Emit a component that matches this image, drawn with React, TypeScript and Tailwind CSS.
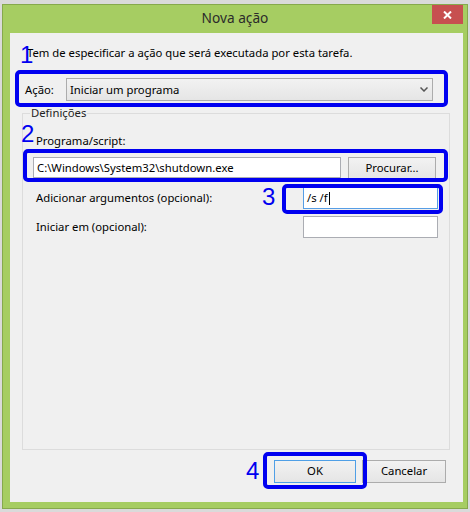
import React from 'react'

// numbered blue frames drawn over the dialog (annotations)
function Mark({ className }: { className: string }) {
  return <div className={`absolute border-[4px] border-[#0000f0] rounded-[5px] ${className}`} />
}

function Num({ n, className }: { n: string; className: string }) {
  return (
    <span className={`absolute font-['Liberation_Sans',sans-serif] text-[24px] leading-[24px] text-[#0000f0] ${className}`}>
      {n}
    </span>
  )
}

const face = 'h-[23px] flex items-center border border-[#acacac] bg-gradient-to-b from-[#f2f2f2] to-[#e5e5e5]'

export default function App() {
  return (
    <div className="w-[470px] h-[512px] overflow-hidden bg-[#dadada] pt-[4px] pl-[2px] font-['Noto_Sans',sans-serif]">
      <div className="w-[466px] h-[505px] border border-[#86a94c] bg-[#a6cd62] flex flex-col">
        {/* Title bar */}
        <div className="h-[28px] flex items-start">
          <div className="w-[35px]" />
          <div className="flex-1 text-center text-[13.7px] leading-[26px] text-[#2b2b2b]">Nova ação</div>
          <button className="w-[31px] h-[19px] mr-[4px] bg-[#c75050] flex items-center justify-center">
            <svg width="9" height="8" viewBox="0 0 9 8">
              <path d="M1 0.5 L8 7.5 M8 0.5 L1 7.5" stroke="white" strokeWidth="2" />
            </svg>
          </button>
        </div>

        {/* Client area */}
        <div className="relative ml-[7px] w-[453px] h-[469px] bg-[#f0f0f0] text-[11.3px] text-black">
          <p className="pt-[12px] pl-[17px] leading-[16px]">Tem de especificar a ação que será executada por esta tarefa.</p>

          <div className="mt-[17px] flex items-center pl-[15px]">
            <span className="w-[41px] leading-[16px]">Ação:</span>
            <div className={`${face} w-[367px] justify-between pl-[3px] pr-[4px]`}>
              <span className="leading-[16px]">Iniciar um programa</span>
              <svg width="8" height="5" viewBox="0 0 8 5">
                <path d="M0.5 0.5 L4 4 L7.5 0.5" fill="none" stroke="#555" strokeWidth="1.5" />
              </svg>
            </div>
          </div>

          {/* Definições group */}
          <div className="relative mt-[12px] ml-[12px] w-[428px] h-[337px] border border-[#dcdcdc]">
            <span className="absolute left-[7px] -top-[9px] px-[1px] bg-[#f0f0f0] leading-[16px] text-[#1e1e1e]">Definições</span>
            <p className="mt-[19px] pl-[13px] leading-[16px]">Programa/script:</p>
            <div className="mt-[8px] flex items-start pl-[10px]">
              <div className="w-[308px] h-[21px] border border-[#abadb3] bg-white flex items-center pl-[3px] leading-[16px]">
                C:\Windows\System32\shutdown.exe
              </div>
              <div className={`${face} justify-center ml-[7px] w-[88px]`}>Procurar...</div>
            </div>
            <div className="mt-[7px] flex items-center pl-[13px]">
              <span className="flex-1 leading-[16px]">Adicionar argumentos (opcional):</span>
              <div className="w-[135px] h-[22px] mr-[11px] border border-[#569de5] bg-white flex items-center pl-[3px] leading-[16px]">
                /s /f<span className="w-px h-[13px] bg-black ml-[1px]" />
              </div>
            </div>
            <div className="mt-[7px] flex items-center pl-[13px]">
              <span className="flex-1 leading-[16px]">Iniciar em (opcional):</span>
              <div className="w-[135px] h-[22px] mr-[11px] border border-[#abadb3] bg-white" />
            </div>
          </div>

          <div className="mt-[10px] flex justify-end gap-[6px] pr-[17px]">
            <button className={`${face} justify-center w-[82px] !border-[#4f9fe6]`}>OK</button>
            <button className={`${face} justify-center w-[84px]`}>Cancelar</button>
          </div>

          <Mark className="left-[5px] top-[37px] w-[433px] h-[37px]" />
          <Mark className="left-[13px] top-[116px] w-[425px] h-[33px]" />
          <Mark className="left-[272px] top-[151px] w-[161px] h-[30px]" />
          <Mark className="left-[253px] top-[419px] w-[104px] h-[37px]" />
          <Num n="1" className="left-[10px] top-[10px]" />
          <Num n="2" className="left-[11px] top-[89px]" />
          <Num n="3" className="left-[252px] top-[152px]" />
          <Num n="4" className="left-[236px] top-[426px]" />
        </div>
      </div>
    </div>
  )
}
